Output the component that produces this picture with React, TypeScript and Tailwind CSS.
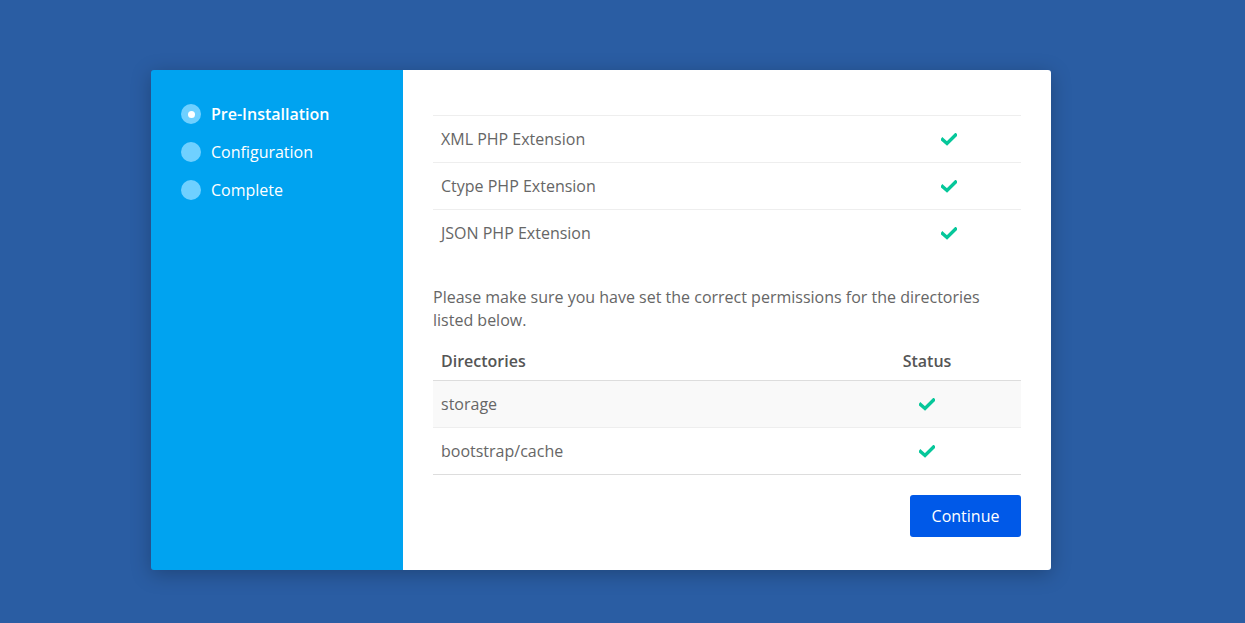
import React from "react";

const Check = () => (
  <svg width="16" height="13" viewBox="0 0 16 13" className="inline-block">
    <polyline points="1.5,6.5 6,10.5 14.5,2" fill="none" stroke="#06c79a" strokeWidth="3.4" strokeLinecap="square" />
  </svg>
);

export default function App() {
  const exts = ["XML PHP Extension", "Ctype PHP Extension", "JSON PHP Extension"];
  const dirs = ["storage", "bootstrap/cache"];
  return (
    <div
      className="w-[1245px] h-[623px] bg-[#2a5da3] flex pl-[151px] pt-[70px]"
      style={{ fontFamily: '"Open Sans", sans-serif' }}
    >
      <div className="w-[900px] h-[500px] flex rounded-[3px] overflow-hidden shadow-[0_4px_20px_rgba(0,0,0,0.25)] self-start">
        <div className="w-[252px] bg-[#00a3f0] pt-[25px] pl-[30px]">
          {[
            { label: "Pre-Installation", active: true },
            { label: "Configuration", active: false },
            { label: "Complete", active: false },
          ].map((s) => (
            <div key={s.label} className="flex items-center h-[38px]">
              <div className="w-5 h-5 rounded-full bg-[#6fd0ff] flex items-center justify-center">
                {s.active && <div className="w-[7px] h-[7px] rounded-full bg-white" />}
              </div>
              <span className={`ml-[10px] text-white text-[16px] ${s.active ? "font-semibold" : ""}`}>
                {s.label}
              </span>
            </div>
          ))}
        </div>
        <div className="flex-1 bg-white px-[30px] pt-[45px] text-[16px] text-[#666] leading-[23px]">
          <div>
            {exts.map((e) => (
              <div key={e} className="flex border-t border-[#eee] h-[47px] items-center">
                <div className="flex-1 pl-2">{e}</div>
                <div className="w-[144px] flex justify-center">
                  <Check />
                </div>
              </div>
            ))}
          </div>
          <p className="mt-[30px] text-[#666]">
            Please make sure you have set the correct permissions for the directories listed below.
          </p>
          <div className="mt-[10px]">
            <div className="flex h-[39px] items-center border-b border-[#ddd] font-semibold text-[#555]">
              <div className="flex-1 pl-2">Directories</div>
              <div className="w-[188px] text-center">Status</div>
            </div>
            {dirs.map((d, i) => (
              <div
                key={d}
                className={`flex h-[47px] items-center border-b ${i === dirs.length - 1 ? "border-[#ddd]" : "border-[#eee]"} ${i === 0 ? "bg-[#f9f9f9]" : ""}`}
              >
                <div className="flex-1 pl-2">{d}</div>
                <div className="w-[188px] flex justify-center">
                  <Check />
                </div>
              </div>
            ))}
          </div>
          <div className="flex justify-end mt-[20px]">
            <button className="w-[111px] h-[42px] bg-[#0059e8] text-white rounded-[3px] text-[16px]">
              Continue
            </button>
          </div>
        </div>
      </div>
    </div>
  );
}
